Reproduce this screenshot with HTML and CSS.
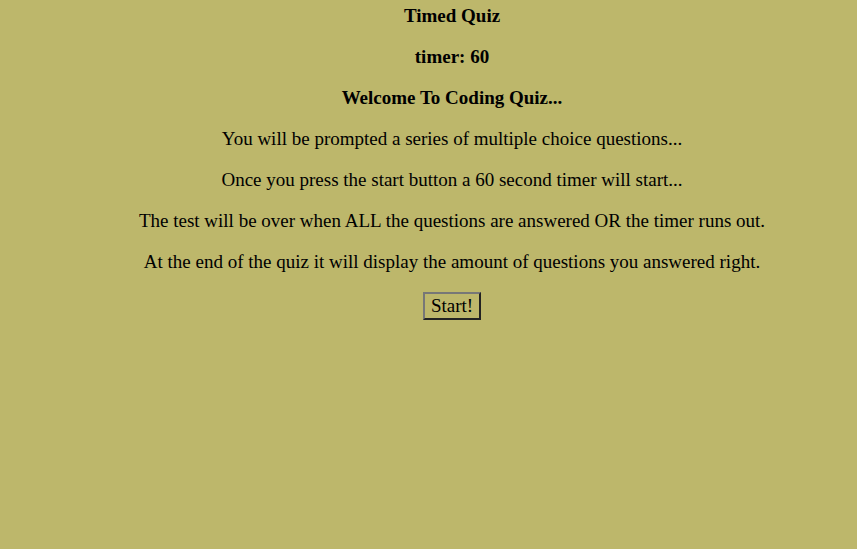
FILE: index.html
```html
<!DOCTYPE html>
<html>
<head>
<meta charset="utf-8">
<link rel="stylesheet" href="styles.css">
</head>
<body>
<main class="quiz">
  <h1 class="title">Timed Quiz</h1>
  <h2 class="timer">timer: 60</h2>
  <h3 class="welcome">Welcome To Coding Quiz...</h3>
  <p class="line">You will be prompted a series of multiple choice questions...</p>
  <p class="line">Once you press the start button a 60 second timer will start...</p>
  <p class="line">The test will be over when ALL the questions are answered OR the timer runs out.</p>
  <p class="line">At the end of the quiz it will display the amount of questions you answered right.</p>
  <button class="start">Start!</button>
</main>
</body>
</html>
```
FILE: styles.css
```css
html, body {
  margin: 0;
  background: #bdb76b;
}
body {
  font-family: "Liberation Serif", "Times New Roman", serif;
  font-size: 19px;
  color: #000;
}
.quiz {
  padding: 5px 0 0 47px;
  text-align: center;
}
.title, .timer, .welcome, .line {
  font-size: 19px;
  margin: 0 0 19px;
  line-height: 22px;
}
.title, .timer, .welcome {
  font-weight: bold;
}
.start {
  font-family: "Liberation Serif", "Times New Roman", serif;
  font-size: 19px;
  background: transparent;
  color: #000;
  border: 2px solid;
  border-color: #777 #222 #222 #777;
  padding: 1px 6px;
  line-height: 22px;
}
```
